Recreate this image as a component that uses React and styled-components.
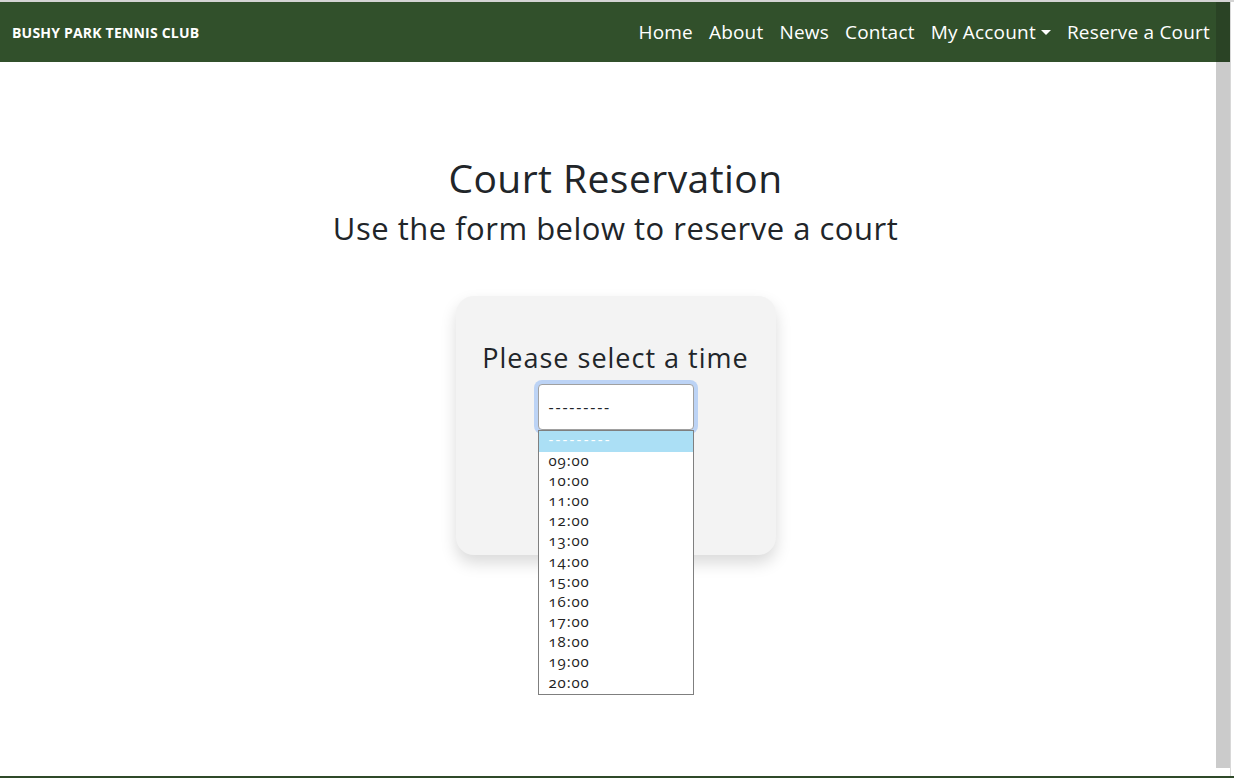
import React from "react";
import styled, { createGlobalStyle } from "styled-components";

const GlobalStyle = createGlobalStyle`
  html, body { margin: 0; padding: 0; background: #fff; }
  body { font-family: "Open Sans", "Noto Sans", sans-serif; color: #212529; }
  * { box-sizing: border-box; }
`;

const Frame = styled.div`
  position: relative;
  width: 1234px;
  height: 778px;
  overflow: hidden;
  display: flex;
  flex-direction: column;
  border-top: 2px solid #d4d4d4;
  border-bottom: 2px solid #2f4a29;
`;

const Page = styled.div`
  width: 1231px;
  flex: 1;
  display: flex;
  flex-direction: column;
  border-right: 1px solid #d8d8d8;
`;

const Navbar = styled.nav`
  height: 60px;
  background: #31502b;
  display: flex;
  align-items: center;
  justify-content: space-between;
  padding: 0 12px;
  width: 1230px;
`;

const Brand = styled.a`
  color: #fff;
  font-family: "Open Sans", sans-serif;
  font-weight: 700;
  font-size: 14px;
  letter-spacing: 0.2px;
  text-decoration: none;
`;

const NavList = styled.ul`
  display: flex;
  list-style: none;
  margin: 0;
  padding: 0;
`;

const NavLink = styled.a`
  color: #fff;
  font-size: 19px;
  padding: 0 8px;
  text-decoration: none;
  display: flex;
  align-items: center;
  letter-spacing: 0.2px;
`;

const Caret = styled.span`
  display: inline-block;
  margin-left: 5px;
  border-top: 5px solid #fff;
  border-left: 5px solid transparent;
  border-right: 5px solid transparent;
`;

const Main = styled.main`
  flex: 1;
  display: flex;
  flex-direction: column;
  align-items: center;
  padding-left: 1px;
`;

const Title = styled.h1`
  font-weight: 400;
  font-size: 39px;
  margin: 93px 0 0;
  line-height: 1.2;
  letter-spacing: 0.45px;
`;

const Subtitle = styled.h2`
  font-weight: 400;
  font-size: 31px;
  margin: 8px 0 0;
  line-height: 1.2;
  letter-spacing: 0.5px;
`;

const Card = styled.div`
  margin-top: 49px;
  width: 320px;
  height: 259px;
  background: #f3f3f3;
  border-radius: 18px;
  box-shadow: 0 8px 16px rgba(0, 0, 0, 0.15);
  display: flex;
  flex-direction: column;
  align-items: center;
  padding-top: 46px;
`;

const CardHeading = styled.h3`
  font-weight: 400;
  font-size: 27px;
  letter-spacing: 1px;
  margin: 0 0 10px;
  line-height: 1.2;
`;

const SelectWrap = styled.div`
  position: relative;
  width: 156px;
`;

const SelectBox = styled.div`
  height: 46px;
  background: #fff;
  border: 1px solid #a0a0a0;
  border-radius: 4px;
  box-shadow: 0 0 0 4px #bcd3f5;
  display: flex;
  align-items: center;
  padding-left: 10px;
  font-size: 16px;
  letter-spacing: 1.8px;
  color: #212529;
`;

const ListBox = styled.ul`
  position: absolute;
  top: 46px;
  left: 0;
  width: 156px;
  margin: 0;
  padding: 0;
  list-style: none;
  background: #fff;
  border: 1px solid #7f7f7f;
  z-index: 2;
`;

const Option = styled.li`
  height: 20.2px;
  line-height: 17px;
  padding-left: 10px;
  font-size: 15px;
  font-variant-numeric: oldstyle-nums;
  letter-spacing: ${(p) => (p.$active ? "2.2px" : "0.9px")};
  color: ${(p) => (p.$active ? "#fff" : "#222")};
  background: ${(p) => (p.$active ? "#abdff5" : "transparent")};
`;

const Scrollbar = styled.div`
  position: absolute;
  top: 0;
  left: 1216px;
  width: 14px;
  height: 766px;
  background: #cbcbcb;
  z-index: 5;
`;

const ScrollNavShade = styled.div`
  height: 60px;
  background: #2a4325;
`;

const times = ["---------", "09:00", "10:00", "11:00", "12:00", "13:00", "14:00", "15:00", "16:00", "17:00", "18:00", "19:00", "20:00"];

export default function App() {
  return (
    <>
      <GlobalStyle />
      <Frame>
        <Page>
          <Navbar>
            <Brand href="#">BUSHY PARK TENNIS CLUB</Brand>
            <NavList>
              <li><NavLink href="#">Home</NavLink></li>
              <li><NavLink href="#">About</NavLink></li>
              <li><NavLink href="#">News</NavLink></li>
              <li><NavLink href="#">Contact</NavLink></li>
              <li><NavLink href="#">My Account<Caret /></NavLink></li>
              <li><NavLink href="#">Reserve a Court</NavLink></li>
            </NavList>
          </Navbar>
          <Main>
            <Title>Court Reservation</Title>
            <Subtitle>Use the form below to reserve a court</Subtitle>
            <Card>
              <CardHeading>Please select a time</CardHeading>
              <SelectWrap>
                <SelectBox>---------</SelectBox>
                <ListBox>
                  {times.map((t, i) => (
                    <Option key={t} $active={i === 0}>{t}</Option>
                  ))}
                </ListBox>
              </SelectWrap>
            </Card>
          </Main>
        </Page>
        <Scrollbar>
          <ScrollNavShade />
        </Scrollbar>
      </Frame>
    </>
  );
}
